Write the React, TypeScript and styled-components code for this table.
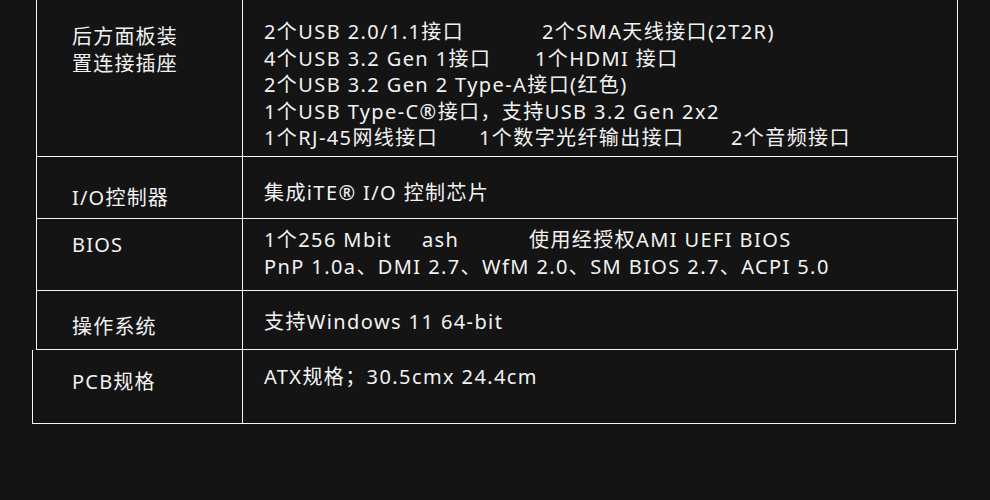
import React from "react";
import styled, { createGlobalStyle } from "styled-components";

const GlobalStyle = createGlobalStyle`
  html, body {
    margin: 0;
    padding: 0;
    background: #141414;
  }
  body {
    width: 990px;
    height: 500px;
    overflow: hidden;
    font-family: "Noto Sans", "Noto Sans CJK SC", sans-serif;
    color: #f2f2f2;
  }
`;

const Page = styled.div`
  width: 990px;
  height: 500px;
  background: #141414;
`;

const Table = styled.div`
  display: flex;
  flex-direction: column;
`;

// the last row of the source image sits a few pixels further left
const Row = styled.div<{ $h: number; $last?: boolean }>`
  display: flex;
  height: ${(p) => p.$h}px;
  width: ${(p) => (p.$last ? 924 : 922)}px;
  margin-left: ${(p) => (p.$last ? 32 : 36)}px;
  box-sizing: border-box;
  border: 1px solid #f5f5f5;
  border-top: none;
`;

const Label = styled.div<{ $pad: number; $last?: boolean }>`
  width: ${(p) => (p.$last ? 210 : 206)}px;
  flex-shrink: 0;
  box-sizing: border-box;
  padding: ${(p) => p.$pad + 5}px 0 0 ${(p) => (p.$last ? 39 : 35)}px;
  border-right: 1px solid #f5f5f5;
  font-size: 20px;
  line-height: 26.5px;
  letter-spacing: 1.2px;
`;

const Value = styled.div<{ $pad: number }>`
  flex: 1;
  padding: ${(p) => p.$pad}px 0 0 21px;
  font-size: 20px;
  line-height: 26.5px;
  letter-spacing: 1.4px;
  white-space: nowrap;
`;

const Line = styled.div`
  display: flex;
`;

const Seg = styled.span<{ $w?: number }>`
  display: inline-block;
  ${(p) => (p.$w ? `width: ${p.$w}px; flex-shrink: 0;` : "")}
`;

export default function App() {
  return (
    <Page>
      <GlobalStyle />
      <Table>
        <Row $h={157}>
          <Label $pad={19}>
            后方面板装
            <br />
            置连接插座
          </Label>
          <Value $pad={19}>
            <Line>
              <Seg $w={278}>2个USB 2.0/1.1接口</Seg>
              <Seg>2个SMA天线接口(2T2R)</Seg>
            </Line>
            <Line>
              <Seg $w={271}>4个USB 3.2 Gen 1接口</Seg>
              <Seg>1个HDMI 接口</Seg>
            </Line>
            <Line>
              <Seg>2个USB 3.2 Gen 2 Type-A接口(红色)</Seg>
            </Line>
            <Line>
              <Seg>1个USB Type-C®接口，支持USB 3.2 Gen 2x2</Seg>
            </Line>
            <Line>
              <Seg $w={215}>1个RJ-45网线接口</Seg>
              <Seg $w={252}>1个数字光纤输出接口</Seg>
              <Seg>2个音频接口</Seg>
            </Line>
          </Value>
        </Row>
        <Row $h={62}>
          <Label $pad={23}>I/O控制器</Label>
          <Value $pad={23}>集成iTE® I/O 控制芯片</Value>
        </Row>
        <Row $h={72}>
          <Label $pad={8}>BIOS</Label>
          <Value $pad={8}>
            <Line>
              <Seg $w={158}>1个256 Mbit</Seg>
              <Seg $w={107}>ash</Seg>
              <Seg>使用经授权AMI UEFI BIOS</Seg>
            </Line>
            <Line>
              <Seg>PnP 1.0a、DMI 2.7、WfM 2.0、SM BIOS 2.7、ACPI 5.0</Seg>
            </Line>
          </Value>
        </Row>
        <Row $h={59}>
          <Label $pad={18}>操作系统</Label>
          <Value $pad={18}>支持Windows 11 64-bit</Value>
        </Row>
        <Row $h={74} $last>
          <Label $pad={14} $last>
            PCB规格
          </Label>
          <Value $pad={14}>ATX规格；30.5cmx 24.4cm</Value>
        </Row>
      </Table>
    </Page>
  );
}
